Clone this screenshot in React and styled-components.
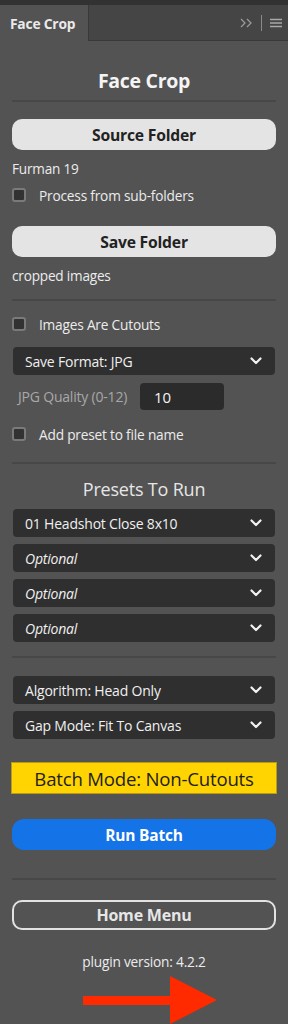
import React from 'react';
import styled, { createGlobalStyle } from 'styled-components';

const GlobalStyle = createGlobalStyle`
    body {
        margin: 0;
        background: #535353;
        font-family: 'Open Sans', 'Noto Sans', sans-serif;
        color: #ececec;
    }
`;

const Chevron = () => (
    <svg width="12" height="8" viewBox="0 0 12 8">
        <path d="M1.5 1.5 L6 6 L10.5 1.5" fill="none" stroke="#f2f2f2" strokeWidth="2.2" strokeLinecap="round" strokeLinejoin="round" />
    </svg>
);

const Select = ({ label, italic, top }) => (
    <SelectBox $top={top}>
        <SelectText $italic={italic}>{label}</SelectText>
        <Chevron />
    </SelectBox>
);

const Check = ({ label, top }) => (
    <CheckRow $top={top}>
        <CheckBox />
        <span>{label}</span>
    </CheckRow>
);

const App = () => {
    return (
        <Panel>
            <GlobalStyle />
            <TopStrip />
            <TabBar>
                <Tab>Face Crop</Tab>
                <TabTools>
                    <svg width="13" height="10" viewBox="0 0 13 10">
                        <path d="M1 1 L5 5 L1 9 M7 1 L11 5 L7 9" fill="none" stroke="#9a9a9a" strokeWidth="1.3" />
                    </svg>
                    <ToolSep />
                    <svg width="12" height="10" viewBox="0 0 12 10">
                        <path d="M0 1.5 H12 M0 5 H12 M0 8.5 H12" stroke="#a8a8a8" strokeWidth="1.4" />
                    </svg>
                </TabTools>
            </TabBar>

            <Content>
                <Title>Face Crop</Title>
                <Divider $top={7} />
                <LightButton $top={17}>Source Folder</LightButton>
                <Info $top={10}>Furman 19</Info>
                <Check label="Process from sub-folders" top={8} />
                <LightButton $top={22}>Save Folder</LightButton>
                <Info $top={10}>cropped images</Info>
                <Divider $top={14} />
                <Check label="Images Are Cutouts" top={14} />
                <Select label="Save Format: JPG" top={14} />
                <QualityRow>
                    <QualityLabel>JPG Quality (0-12)</QualityLabel>
                    <QualityInput>10</QualityInput>
                </QualityRow>
                <Check label="Add preset to file name" top={15} />
                <Divider $top={19} />
                <SectionTitle>Presets To Run</SectionTitle>
                <Select label="01 Headshot Close 8x10" top={8} />
                <Select label="Optional" italic top={7} />
                <Select label="Optional" italic top={7} />
                <Select label="Optional" italic top={7} />
                <Divider $top={14} />
                <Select label="Algorithm: Head Only" top={18} />
                <Select label="Gap Mode: Fit To Canvas" top={7} />
                <Banner>Batch Mode: Non-Cutouts</Banner>
                <RunButton>Run Batch</RunButton>
                <Divider $top={28} />
                <OutlineButton>Home Menu</OutlineButton>
                <Version>plugin version: 4.2.2</Version>
                <Arrow width="140" height="48" viewBox="0 0 140 48">
                    <path d="M0 20 H87 V0 L134 24 L87 48 V29 H0 Z" fill="#ff2a00" />
                </Arrow>
            </Content>
        </Panel>
    );
};

export default App;

const Panel = styled.div`
    width: 288px;
    min-height: 1024px;
    background: #535353;
    overflow: hidden;
`;

const TopStrip = styled.div`
    height: 5px;
    background: #323232;
`;

const TabBar = styled.div`
    display: flex;
    height: 35px;
    background: #454545;
    border-bottom: 1px solid #393939;
`;

const Tab = styled.div`
    width: 78px;
    padding-left: 10px;
    height: 36px;
    display: flex;
    align-items: center;
    background: #535353;
    border-right: 1px solid #393939;
    font-size: 13.8px;
    font-weight: 700;
    color: #eaeaea;
    letter-spacing: -0.2px;
`;

const TabTools = styled.div`
    margin-left: auto;
    display: flex;
    align-items: center;
    gap: 8px;
    padding-right: 6px;
`;

const ToolSep = styled.div`
    width: 1px;
    height: 16px;
    background: #8a8a8a;
`;

const Content = styled.div`
    display: flex;
    flex-direction: column;
    padding: 0 12px;
`;

const Title = styled.div`
    margin-top: 28px;
    text-align: center;
    font-size: 19.5px;
    line-height: 24px;
    font-weight: 700;
    color: #f4f4f4;
    letter-spacing: -0.3px;
`;

const Divider = styled.div`
    margin-top: ${p => p.$top}px;
    height: 2px;
    background: #474747;
`;

const LightButton = styled.div`
    margin-top: ${p => p.$top}px;
    height: 31px;
    border-radius: 10px;
    background: #e4e4e4;
    display: flex;
    align-items: center;
    justify-content: center;
    font-size: 15.7px;
    font-weight: 700;
    color: #222;
    letter-spacing: -0.2px;
`;

const Info = styled.div`
    margin-top: ${p => p.$top}px;
    font-size: 13.6px;
    line-height: 18px;
    color: #ececec;
    letter-spacing: -0.2px;
`;

const CheckRow = styled.div`
    margin-top: ${p => p.$top}px;
    display: flex;
    align-items: center;
    gap: 13px;
    height: 18px;
    font-size: 13.7px;
    color: #ececec;
    letter-spacing: -0.2px;
`;

const CheckBox = styled.div`
    width: 10px;
    height: 10px;
    border: 2px solid #7a7a7a;
    border-radius: 3px;
    background: #323232;
`;

const SelectBox = styled.div`
    margin: ${p => p.$top}px 1px 0;
    height: 28px;
    border-radius: 4px;
    background: #2f2f2f;
    display: flex;
    align-items: center;
    justify-content: space-between;
    padding: 0 13px 0 12px;
`;

const SelectText = styled.span`
    font-size: 14px;
    color: #f0f0f0;
    font-style: ${p => (p.$italic ? 'italic' : 'normal')};
    letter-spacing: -0.2px;
`;

const QualityRow = styled.div`
    margin-top: 8px;
    display: flex;
    align-items: center;
    padding-left: 6px;
`;

const QualityLabel = styled.span`
    width: 122px;
    font-size: 14px;
    color: #a8a8a8;
    letter-spacing: -0.2px;
`;

const QualityInput = styled.div`
    width: 70px;
    height: 27px;
    border-radius: 4px;
    background: #2b2b2b;
    display: flex;
    align-items: center;
    padding-left: 14px;
    font-size: 15px;
    color: #f4f4f4;
`;

const SectionTitle = styled.div`
    margin-top: 13px;
    text-align: center;
    font-size: 18px;
    line-height: 24px;
    color: #e6e6e6;
    letter-spacing: -0.2px;
`;

const Banner = styled.div`
    margin: 23px -1px 0;
    height: 30px;
    background: #ffd400;
    border: 1px solid #b89a1a;
    display: flex;
    align-items: center;
    justify-content: center;
    font-size: 18.6px;
    color: #1e1e1e;
    letter-spacing: -0.2px;
`;

const RunButton = styled.div`
    margin-top: 25px;
    height: 31px;
    border-radius: 12px;
    background: #1473e6;
    display: flex;
    align-items: center;
    justify-content: center;
    font-size: 15.5px;
    font-weight: 700;
    color: #fff;
    letter-spacing: -0.2px;
`;

const OutlineButton = styled.div`
    margin-top: 20px;
    height: 26px;
    border: 2px solid #e2e2e2;
    border-radius: 10px;
    display: flex;
    align-items: center;
    justify-content: center;
    font-size: 16px;
    font-weight: 700;
    color: #e6e6e6;
    letter-spacing: -0.2px;
`;

const Version = styled.div`
    margin-top: 23px;
    text-align: center;
    font-size: 13.7px;
    line-height: 18px;
    color: #ececec;
    letter-spacing: -0.2px;
`;

const Arrow = styled.svg`
    margin: 5px 0 0 71px;
    flex-shrink: 0;
`;
